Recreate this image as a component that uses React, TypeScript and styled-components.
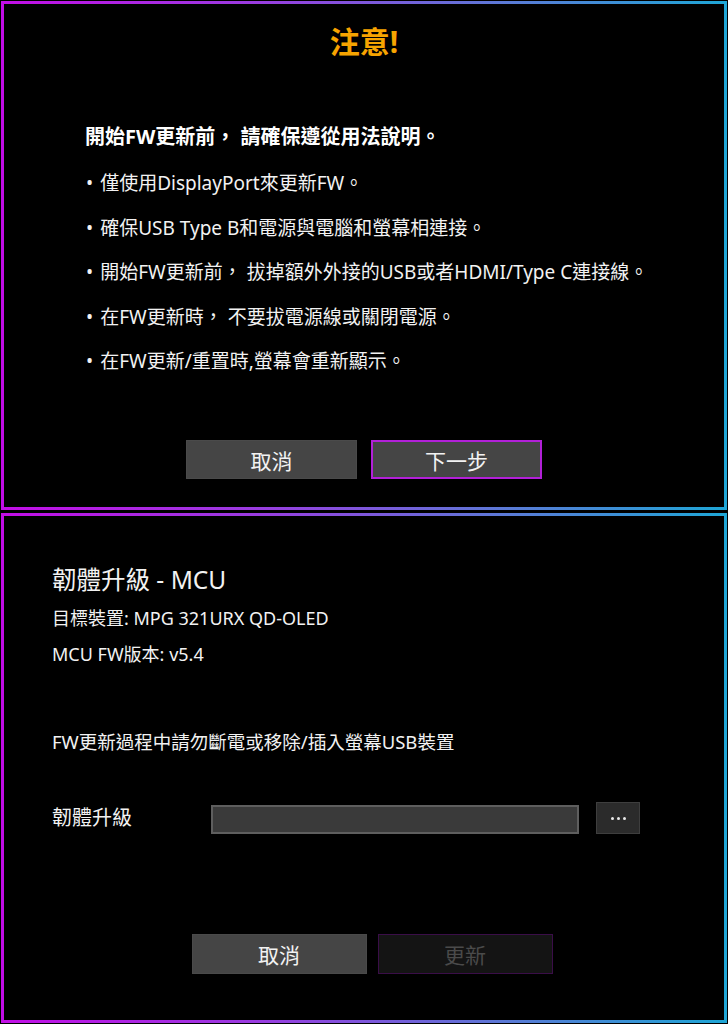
import styled, { createGlobalStyle } from 'styled-components'

/*---> Component <---*/
export default function App() {
  return (
    <>
      <GlobalStyle />
      <Page>
        <Panel $height={509}>
          <Warning>注意!</Warning>
          <Lead>開始FW更新前， 請確保遵從用法說明。</Lead>
          <Bullets>
            <Bullet>僅使用DisplayPort來更新FW。</Bullet>
            <Bullet>確保USB Type B和電源與電腦和螢幕相連接。</Bullet>
            <Bullet>開始FW更新前， 拔掉額外外接的USB或者HDMI/Type C連接線。</Bullet>
            <Bullet>在FW更新時， 不要拔電源線或關閉電源。</Bullet>
            <Bullet>在FW更新/重置時,螢幕會重新顯示。</Bullet>
          </Bullets>
          <ButtonRow $top={64} $gap={14} $offset={0}>
            <ActionButton>取消</ActionButton>
            <ActionButton $primary>下一步</ActionButton>
          </ButtonRow>
        </Panel>
        <Panel $height={510}>
          <Info>
            <Heading>韌體升級 - MCU</Heading>
            <InfoLine>目標裝置: MPG 321URX QD-OLED</InfoLine>
            <InfoLine>MCU FW版本: v5.4</InfoLine>
            <Notice>FW更新過程中請勿斷電或移除/插入螢幕USB裝置</Notice>
            <FileRow>
              <FileLabel>韌體升級</FileLabel>
              <FileInput />
              <BrowseButton>
                <Dot />
                <Dot />
                <Dot />
              </BrowseButton>
            </FileRow>
          </Info>
          <ButtonRow $top={100} $gap={11} $offset={16}>
            <ActionButton $wide>取消</ActionButton>
            <ActionButton $wide $disabled>
              更新
            </ActionButton>
          </ButtonRow>
        </Panel>
      </Page>
    </>
  )
}

/*---> Styles <---*/
const GlobalStyle = createGlobalStyle`
  html, body {
    margin: 0;
    padding: 0;
    background: #000;
  }
  body {
    font-family: 'Noto Sans', 'Noto Sans CJK TC', sans-serif;
    color: #f2f2f2;
  }
`

const Page = styled.div`
  width: 728px;
  height: 1024px;
  padding: 1px;
  box-sizing: border-box;
  display: flex;
  flex-direction: column;
  gap: 3px;
  background: #000;
`

const Panel = styled.div<{ $height: number }>`
  height: ${(p) => p.$height}px;
  box-sizing: border-box;
  border: 3px solid;
  border-image: linear-gradient(90deg, #c20ee6 0%, #9a3ce0 35%, #5a7ad6 70%, #1fa6d6 100%) 1;
  display: flex;
  flex-direction: column;
`

const Warning = styled.div`
  margin-top: 18px;
  text-align: center;
  font-size: 30px;
  line-height: 40px;
  font-weight: 700;
  color: #f7a400;
`

const Lead = styled.div`
  margin: 60px 0 0 81px;
  font-size: 20px;
  line-height: 30px;
  font-weight: 700;
  color: #fff;
`

const Bullets = styled.ul`
  list-style: none;
  margin: 16px 0 0 82px;
  padding: 0;
  display: flex;
  flex-direction: column;
  gap: 14.5px;
`

const Bullet = styled.li`
  font-size: 19px;
  line-height: 30px;
  white-space: nowrap;

  &::before {
    content: '•';
    margin-right: 7px;
  }
`

const ButtonRow = styled.div<{ $top: number; $gap: number; $offset: number }>`
  margin-top: ${(p) => p.$top}px;
  padding-left: ${(p) => p.$offset}px;
  display: flex;
  justify-content: center;
  gap: ${(p) => p.$gap}px;
`

const ActionButton = styled.button<{ $primary?: boolean; $disabled?: boolean; $wide?: boolean }>`
  width: ${(p) => (p.$wide ? 175 : 171)}px;
  height: ${(p) => (p.$wide ? 40 : 39)}px;
  box-sizing: border-box;
  font-family: inherit;
  font-size: 21px;
  color: ${(p) => (p.$disabled ? '#4a4a4a' : '#f2f2f2')};
  background: ${(p) => (p.$disabled ? '#141414' : '#454545')};
  border: ${(p) =>
    p.$primary ? '2px solid #b220d8' : p.$disabled ? '1px solid #3a0e48' : '1px solid #4a4a4a'};
  padding: 0;
`

const Info = styled.div`
  padding: 46px 0 0 48px;
  display: flex;
  flex-direction: column;
`

const Heading = styled.div`
  font-size: 24.5px;
  line-height: 36px;
`

const InfoLine = styled.div`
  margin-top: 4px;
  font-size: 18px;
  line-height: 32px;
`

const Notice = styled.div`
  margin-top: 56px;
  font-size: 18.5px;
  line-height: 32px;
`

const FileRow = styled.div`
  margin-top: 44px;
  display: flex;
  align-items: center;
`

const FileLabel = styled.div`
  width: 159px;
  font-size: 20px;
  line-height: 30px;
`

const FileInput = styled.div`
  margin-top: 2px;
  width: 368px;
  height: 29px;
  box-sizing: border-box;
  background: #3a3a3a;
  border: 2px solid #5e5e5e;
`

const BrowseButton = styled.div`
  margin-left: 17px;
  width: 44px;
  height: 32px;
  box-sizing: border-box;
  background: #2b2b2b;
  border: 1px solid #3e3e3e;
  display: flex;
  align-items: center;
  justify-content: center;
  gap: 3px;
`

const Dot = styled.span`
  width: 3px;
  height: 3px;
  border-radius: 50%;
  background: #e8e8e8;
`
